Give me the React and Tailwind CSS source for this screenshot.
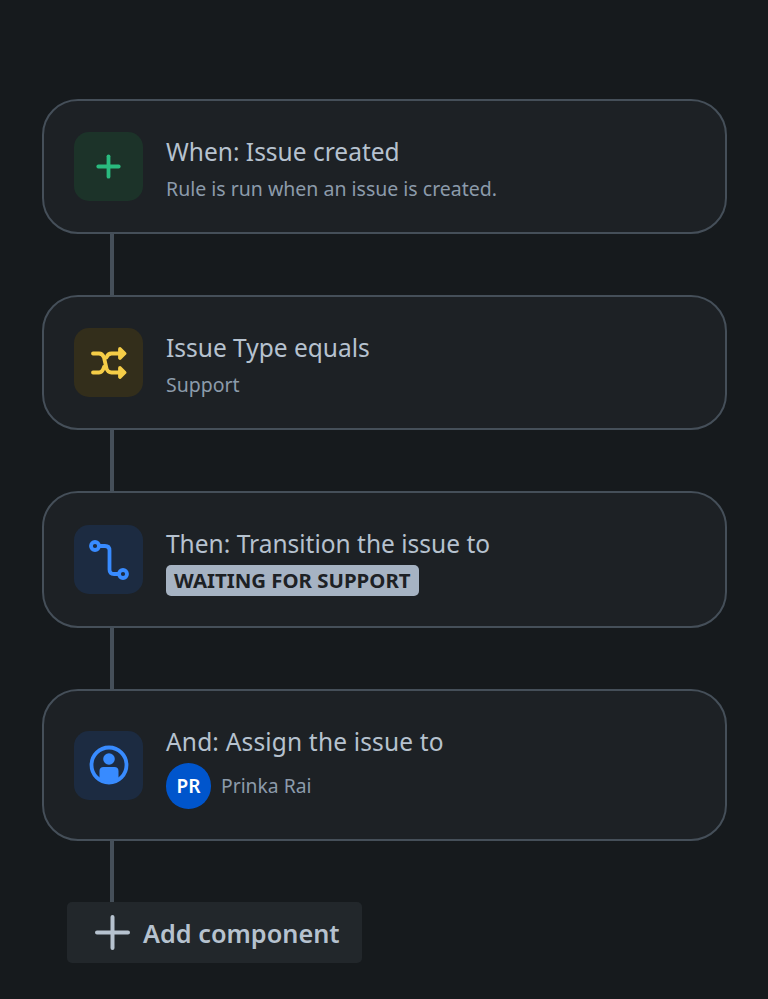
import { Plus } from 'lucide-react'

const font = "font-['Noto_Sans','Open_Sans',sans-serif]"

function Shuffle() {
  return (
    <svg width="36" height="32" viewBox="0 0 36 32" fill="none" stroke="#f5cd47" strokeWidth="3.800" strokeLinecap="round" strokeLinejoin="round">
      <path d="M2 6.500h6c3 0 4 1.500 5 4l2.500 11c.8 2.500 2 4 5 4h11" />
      <path d="M13 20c-1 3.500-2 5.500-5 5.500H2" />
      <path d="M15.500 10.500c.8-2.500 2-4 5-4h11" />
      <path d="M29 2 33.500 6.500 29 11z" fill="#f5cd47" />
      <path d="M29 21l4.500 4.500L29 30z" fill="#f5cd47" />
    </svg>
  )
}

function Transition() {
  return (
    <svg width="40" height="40" viewBox="0 0 40 40" fill="none" stroke="#388bff" strokeWidth="3.800" strokeLinecap="round">
      <circle cx="6" cy="6" r="4" />
      <circle cx="34" cy="34" r="4" />
      <path d="M10 6h6c3 0 4.500 1.500 4.500 4.500v19c0 3 1.500 4.500 4.500 4.500h5" />
    </svg>
  )
}

function Person() {
  return (
    <svg width="40" height="40" viewBox="0 0 40 40">
      <circle cx="20" cy="20" r="17.500" fill="none" stroke="#388bff" strokeWidth="3.800" />
      <circle cx="20" cy="14" r="5.800" fill="#388bff" />
      <path d="M10.500 26c0-2.500 1.500-4 4-4h11c2.500 0 4 1.500 4 4v8c-3 1.800-6.500 2.500-9.500 2.500s-6.500-.7-9.500-2.500z" fill="#388bff" />
    </svg>
  )
}

function BigPlus() {
  return (
    <svg width="35" height="35" viewBox="0 0 35 35" fill="none" stroke="#b6c2cf" strokeWidth="4" strokeLinecap="round">
      <path d="M17.500 2v31M2 17.500h31" />
    </svg>
  )
}

function Tile({ bg, children }) {
  return (
    <div className={`w-[69px] h-[69px] rounded-[15px] flex items-center justify-center shrink-0 ${bg}`}>
      {children}
    </div>
  )
}

function Card({ height, icon, title, children }) {
  return (
    <div className={`${height} rounded-[36px] border-2 border-[#454f59] bg-[#1d2125] flex items-center pl-[30px] gap-[23px]`}>
      {icon}
      <div className="flex flex-col pt-[4px]">{title}{children}</div>
    </div>
  )
}

const Title = ({ children }) => (
  <div className="text-[24.500px] leading-[34px] text-[#b6c2cf]">{children}</div>
)

const Line = () => <div className="w-[4px] h-[61px] ml-[68px] bg-[#454f59]" />

export default function App() {
  return (
    <div className={`w-[768px] h-[999px] overflow-hidden bg-[#161a1d] pt-[99px] pl-[42px] ${font}`}>
      <div className="w-[685px]">
        <Card
          height="h-[135px]"
          icon={<Tile bg="bg-[#1c3329]"><Plus size={35} color="#2abb7f" strokeWidth={2.6} /></Tile>}
          title={<Title>When: Issue created</Title>}
        >
          <div className="text-[19.500px] leading-[28px] mt-[6px] text-[#8c9bab]">Rule is run when an issue is created.</div>
        </Card>
        <Line />
        <Card
          height="h-[135px]"
          icon={<Tile bg="bg-[#332e1b]"><Shuffle /></Tile>}
          title={<Title>Issue Type equals</Title>}
        >
          <div className="text-[19.500px] leading-[28px] mt-[6px] text-[#8c9bab]">Support</div>
        </Card>
        <Line />
        <Card
          height="h-[137px]"
          icon={<Tile bg="bg-[#1c2b41]"><Transition /></Tile>}
          title={<Title>Then: Transition the issue to</Title>}
        >
          <div className="self-start h-[31px] mt-[4px] px-[8px] rounded-[5px] bg-[#a6b3c3] text-[#1d2125] text-[20.400px] leading-[30px] font-bold whitespace-nowrap">
            WAITING FOR SUPPORT
          </div>
        </Card>
        <Line />
        <Card
          height="h-[152px]"
          icon={<Tile bg="bg-[#1c2b41]"><Person /></Tile>}
          title={<Title><span className="tracking-[0.17px]">And: Assign the issue to</span></Title>}
        >
          <div className="flex items-center gap-[10px] mt-[4px]">
            <div className="w-[45px] h-[46px] rounded-full bg-[#0055cc] text-white font-semibold text-[19px] flex items-center justify-center">PR</div>
            <div className="text-[19.300px] text-[#8c9bab]">Prinka Rai</div>
          </div>
        </Card>
        <Line />
        <div className="ml-[25px] w-[295px] h-[61px] rounded-[5px] bg-[#22272b] flex items-center pl-[28px] gap-[13px]">
          <BigPlus />
          <span className="text-[25.300px] font-semibold text-[#b6c2cf] pt-[2px]">Add component</span>
        </div>
      </div>
    </div>
  )
}
